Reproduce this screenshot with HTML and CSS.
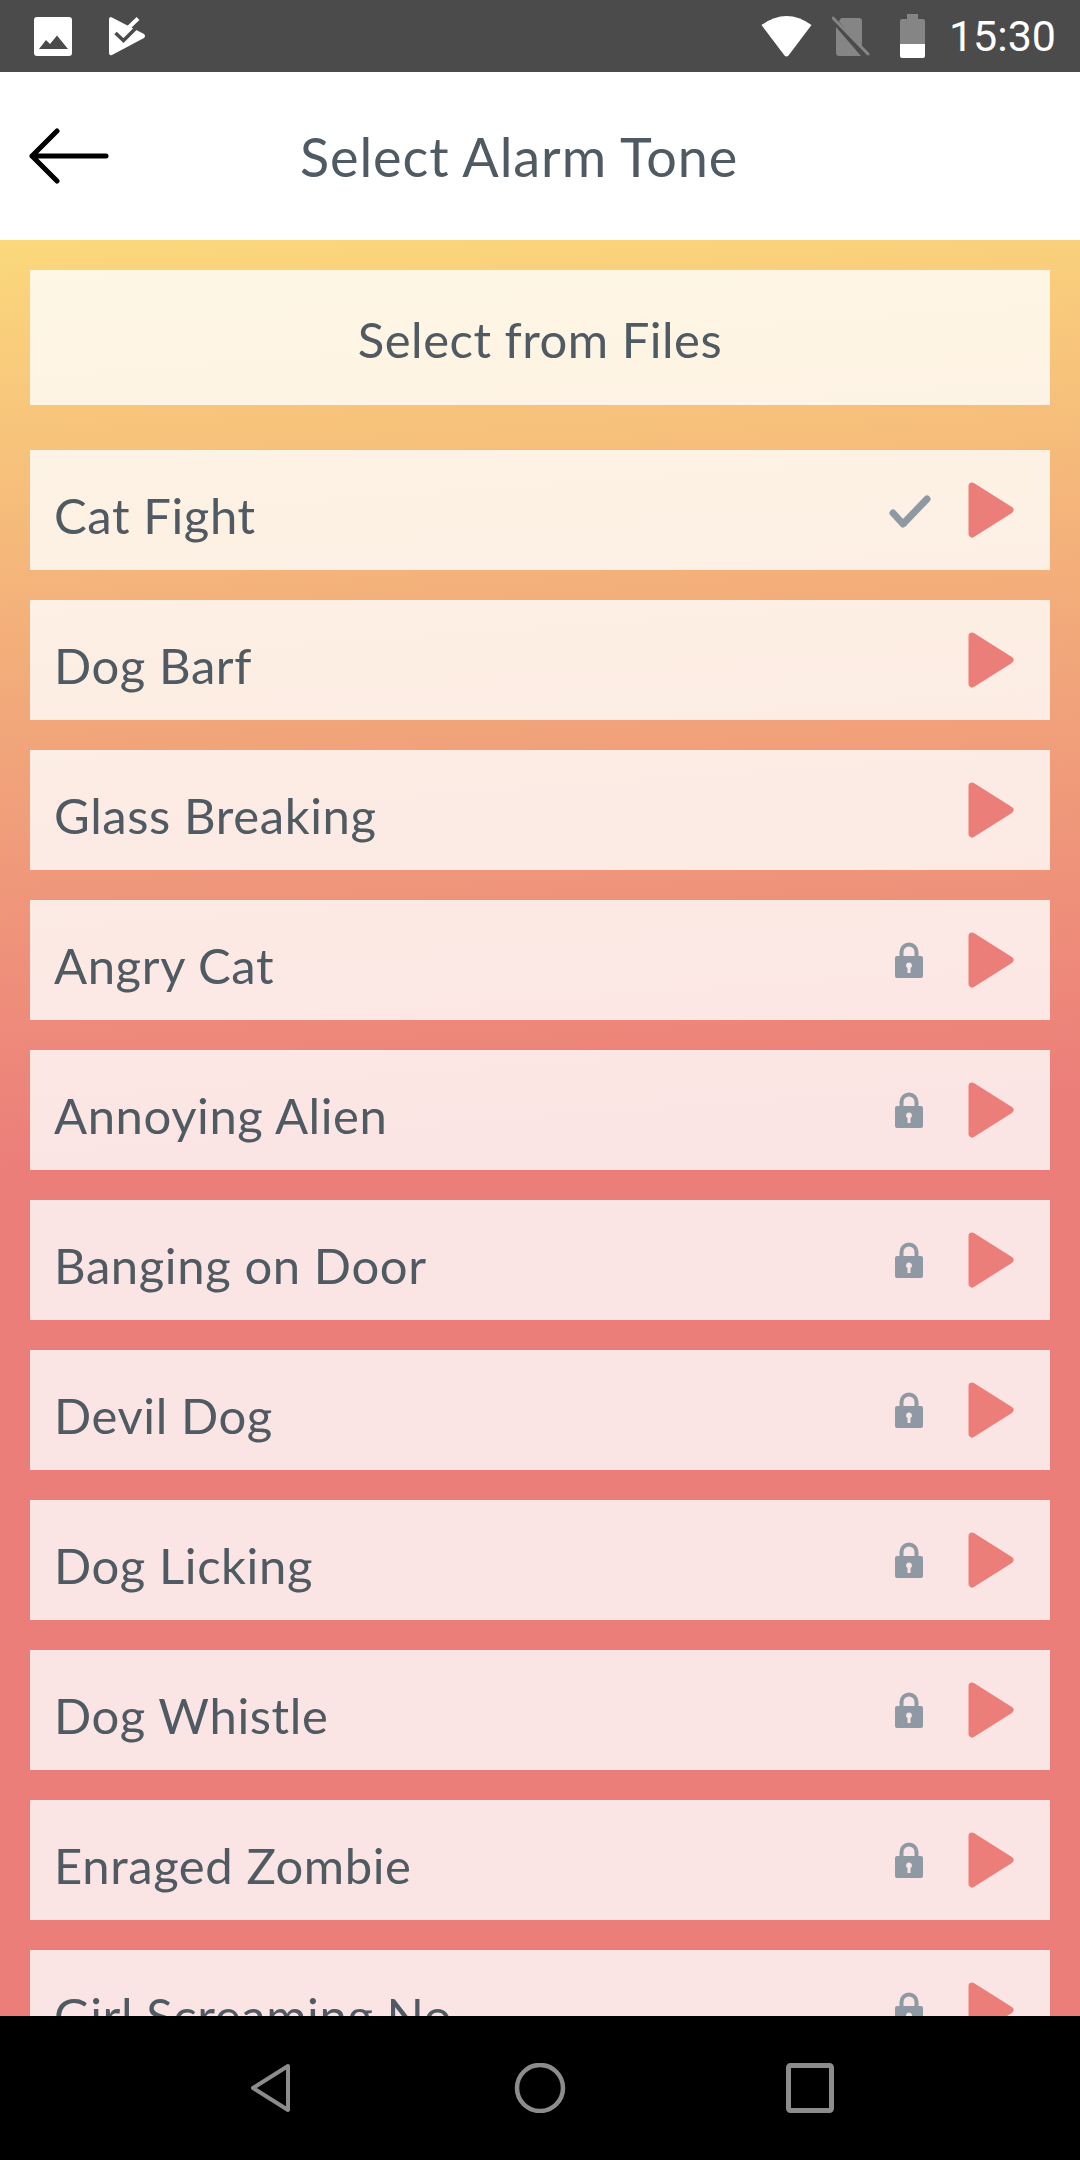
FILE: index.html
```html
<!DOCTYPE html>
<html lang="en">
<head>
    <meta charset="UTF-8">
    <title>Select Alarm Tone</title>
    <link rel="stylesheet" href="styles.css">
</head>
<body>
    <svg class="sprite" width="0" height="0">
        <symbol id="play" viewBox="0 0 46 56">
            <path d="M4 4 L42 28 L4 52 Z" fill="#ec7e7a" stroke="#ec7e7a" stroke-width="7" stroke-linejoin="round"/>
        </symbol>
        <symbol id="lock" viewBox="0 0 28 36">
            <path fill-rule="evenodd" d="M2 14h2.500V10a9.500 9.500 0 0 1 19 0v4H26a2 2 0 0 1 2 2v18a2 2 0 0 1-2 2H2a2 2 0 0 1-2-2V16a2 2 0 0 1 2-2zM8.500 14h11V10a5.500 5.500 0 0 0-11 0zM14 20.500a3 3 0 0 0-1.500 5.600V31h3v-4.900A3 3 0 0 0 14 20.500z" fill="#8f99a3"/>
        </symbol>
    </svg>

    <div class="phone">
        <div class="status-bar">
            <svg class="st-image" viewBox="0 0 38 39">
                <path fill-rule="evenodd" d="M3 0h32a3 3 0 0 1 3 3v33a3 3 0 0 1-3 3H3a3 3 0 0 1-3-3V3a3 3 0 0 1 3-3zM5 32h29L23 18.500 16 27l-4-4z" fill="#fff"/>
            </svg>
            <svg class="st-store" viewBox="0 0 37 39">
                <path d="M2 0 L35 17 Q37 19 35 21 L3 38 Q0 39 0 36 V2 Q0 0 2 0 Z" fill="#fff"/>
                <path d="M6.500 16 L14.500 23.500 L31 7" fill="none" stroke="#4b4b4b" stroke-width="3.500"/>
                <path d="M29 1.500 L15 15" fill="none" stroke="#fff" stroke-width="4"/>
            </svg>
            <div class="status-right">
                <svg class="st-wifi" viewBox="0 0 51 41">
                    <path d="M0.500 9 Q25.500 -9 50.500 9 L27.500 39.500 Q25.500 41.500 23.500 39.500 Z" fill="#fff"/>
                </svg>
                <svg class="st-sim" viewBox="0 0 38 40">
                    <path d="M10 2h17a3 3 0 0 1 3 3v28L7 5.500Q8 2 10 2z M4 11l25 29H7a3 3 0 0 1-3-3z" fill="#858585"/>
                    <path d="M1 2 L36 38" stroke="#858585" stroke-width="3" stroke-linecap="round"/>
                </svg>
                <svg class="st-battery" viewBox="0 0 25 44">
                    <path d="M7 0h11v5h5a2 2 0 0 1 2 2v23H0V7a2 2 0 0 1 2-2h5z" fill="#858585"/>
                    <path d="M0 30h25v12a2 2 0 0 1-2 2H2a2 2 0 0 1-2-2z" fill="#fff"/>
                </svg>
                <span class="clock">15:30</span>
            </div>
        </div>

        <header class="top-bar">
            <svg class="back-arrow" viewBox="0 0 80 56">
                <path d="M3 28H77M28 3L3 28L28 53" fill="none" stroke="#000" stroke-width="5" stroke-linecap="round" stroke-linejoin="round"/>
            </svg>
            <h1 class="title">Select Alarm Tone</h1>
        </header>

        <main class="tones">
            <div class="files-button">Select from Files</div>

            <div class="tone">
                <span class="tone-name">Cat Fight</span>
                <svg class="check" viewBox="0 0 42 33">
                    <path d="M4 18L14 29L38 4" fill="none" stroke="#8f99a3" stroke-width="7" stroke-linecap="round" stroke-linejoin="round"/>
                </svg>
                <svg class="play"><use href="#play"/></svg>
            </div>
            <div class="tone">
                <span class="tone-name">Dog Barf</span>
                <svg class="play"><use href="#play"/></svg>
            </div>
            <div class="tone">
                <span class="tone-name">Glass Breaking</span>
                <svg class="play"><use href="#play"/></svg>
            </div>
            <div class="tone">
                <span class="tone-name">Angry Cat</span>
                <svg class="lock"><use href="#lock"/></svg>
                <svg class="play"><use href="#play"/></svg>
            </div>
            <div class="tone">
                <span class="tone-name">Annoying Alien</span>
                <svg class="lock"><use href="#lock"/></svg>
                <svg class="play"><use href="#play"/></svg>
            </div>
            <div class="tone">
                <span class="tone-name">Banging on Door</span>
                <svg class="lock"><use href="#lock"/></svg>
                <svg class="play"><use href="#play"/></svg>
            </div>
            <div class="tone">
                <span class="tone-name">Devil Dog</span>
                <svg class="lock"><use href="#lock"/></svg>
                <svg class="play"><use href="#play"/></svg>
            </div>
            <div class="tone">
                <span class="tone-name">Dog Licking</span>
                <svg class="lock"><use href="#lock"/></svg>
                <svg class="play"><use href="#play"/></svg>
            </div>
            <div class="tone">
                <span class="tone-name">Dog Whistle</span>
                <svg class="lock"><use href="#lock"/></svg>
                <svg class="play"><use href="#play"/></svg>
            </div>
            <div class="tone">
                <span class="tone-name">Enraged Zombie</span>
                <svg class="lock"><use href="#lock"/></svg>
                <svg class="play"><use href="#play"/></svg>
            </div>
            <div class="tone">
                <span class="tone-name">Girl Screaming No</span>
                <svg class="lock"><use href="#lock"/></svg>
                <svg class="play"><use href="#play"/></svg>
            </div>
        </main>

        <nav class="nav-bar">
            <svg class="nav-icon" viewBox="0 0 60 50">
                <path d="M48 3L13 25L48 47Z" fill="none" stroke="#8c8c8c" stroke-width="4" stroke-linejoin="round"/>
            </svg>
            <svg class="nav-icon" viewBox="0 0 60 50">
                <circle cx="30" cy="25" r="23" fill="none" stroke="#8c8c8c" stroke-width="4.500"/>
            </svg>
            <svg class="nav-icon" viewBox="0 0 60 50">
                <rect x="8.500" y="2.500" width="43" height="45" rx="2" fill="none" stroke="#8c8c8c" stroke-width="5"/>
            </svg>
        </nav>
    </div>
</body>
</html>
```

FILE: styles.css
```css
* {
    margin: 0;
    padding: 0;
    box-sizing: border-box;
}

body {
    font-family: 'Lato', sans-serif;
    color: #4f5a62;
}

.sprite {
    display: block;
    height: 0;
}

.phone {
    width: 1080px;
    height: 2160px;
    display: flex;
    flex-direction: column;
    overflow: hidden;
}

/* status bar */
.status-bar {
    height: 72px;
    flex-shrink: 0;
    background-color: #4b4b4b;
    display: flex;
    align-items: center;
    padding-left: 34px;
    padding-right: 24px;
}

.st-image {
    width: 38px;
    height: 39px;
    margin-right: 37px;
}

.st-store {
    width: 37px;
    height: 39px;
}

.status-right {
    margin-left: auto;
    display: flex;
    align-items: center;
}

.st-wifi {
    width: 51px;
    height: 41px;
    margin-right: 20px;
}

.st-sim {
    width: 38px;
    height: 40px;
    margin-right: 30px;
}

.st-battery {
    width: 25px;
    height: 44px;
    margin-right: 24px;
}

.clock {
    font-family: 'Roboto', sans-serif;
    font-size: 43px;
    color: #fff;
}

/* header */
.top-bar {
    height: 168px;
    flex-shrink: 0;
    background-color: #fff;
    display: flex;
    align-items: center;
    padding-left: 29px;
}

.back-arrow {
    width: 80px;
    height: 56px;
}

.title {
    margin-left: 191px;
    font-size: 54px;
    font-weight: 400;
    letter-spacing: 0.9px;
}

/* list */
.tones {
    flex: 1;
    min-height: 0;
    overflow: hidden;
    padding: 30px;
    display: flex;
    flex-direction: column;
    gap: 30px;
    background: linear-gradient(176deg, #fbd87c 0%, #f3ae7a 22%, #ec7e7a 50%, #ec7e7a 100%);
}

.files-button {
    height: 135px;
    flex-shrink: 0;
    margin-bottom: 15px;
    padding-top: 3px;
    background-color: rgba(255, 255, 255, 0.8);
    display: flex;
    justify-content: center;
    align-items: center;
    font-size: 49px;
    letter-spacing: 0.5px;
}

.tone {
    height: 120px;
    flex-shrink: 0;
    background-color: rgba(255, 255, 255, 0.8);
    display: flex;
    align-items: center;
    padding-left: 24px;
    padding-right: 36px;
}

.tone-name {
    font-size: 49px;
    letter-spacing: 0.6px;
    margin-top: 10px;
    margin-right: auto;
}

.check {
    width: 42px;
    height: 33px;
    margin-right: 37px;
    margin-top: 3px;
}

.lock {
    width: 28px;
    height: 36px;
    margin-right: 45px;
}

.play {
    width: 46px;
    height: 56px;
}

/* android nav */
.nav-bar {
    height: 144px;
    flex-shrink: 0;
    background-color: #000;
    display: flex;
    justify-content: center;
    align-items: center;
    gap: 210px;
}

.nav-icon {
    width: 60px;
    height: 50px;
}
```
